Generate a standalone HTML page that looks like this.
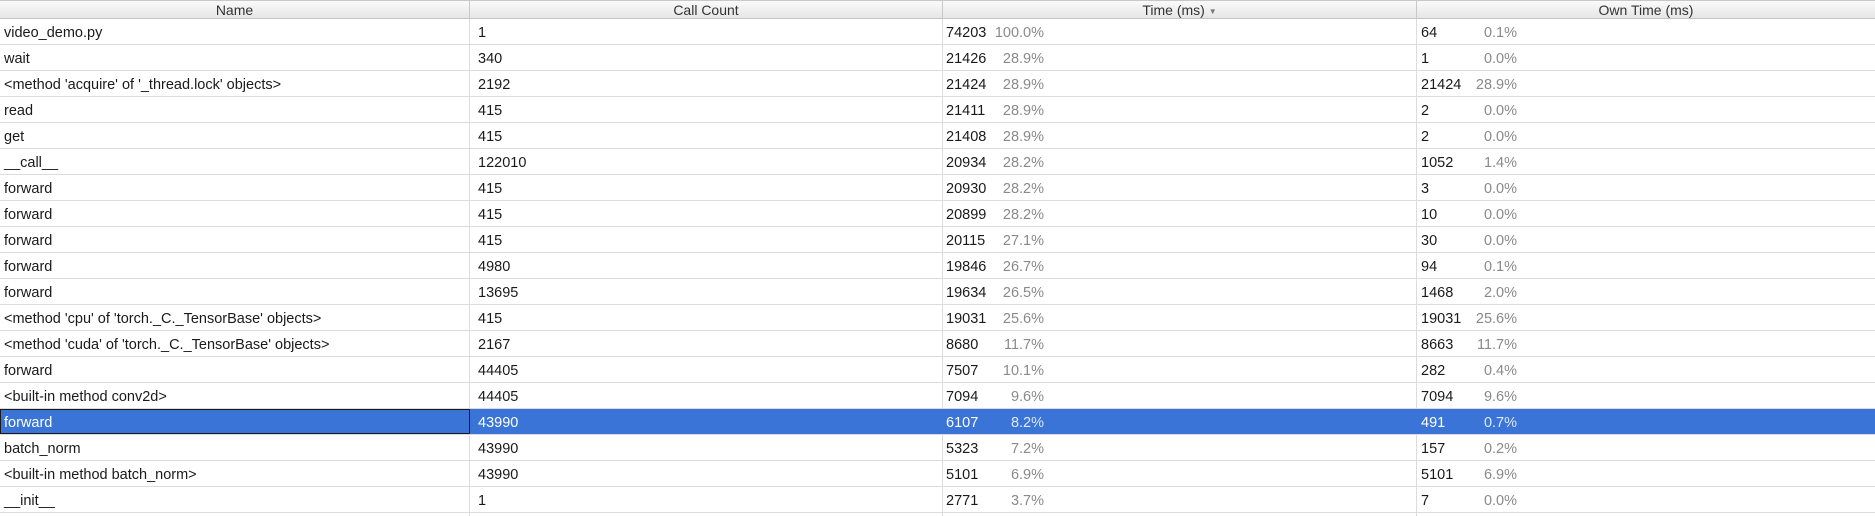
<!DOCTYPE html>
<html><head><meta charset="utf-8"><style>
body{margin:0;width:1875px;height:516px;overflow:hidden;background:#fff;font-family:"Liberation Sans","DejaVu Sans",sans-serif;font-size:14.5px;color:#1a1a1a}
.hdr{position:absolute;left:0;top:0;width:1875px;height:19px;background:linear-gradient(#fafafa,#e6e6e6);border-top:1px solid #c8c8c8;border-bottom:1px solid #c4c4c4;box-sizing:border-box}
.h{position:absolute;top:0;height:18px;line-height:18px;text-align:center;color:#333;border-right:1px solid #c8c8c8;box-sizing:border-box;font-size:14px}
.row{position:absolute;left:0;width:1875px;height:26px;border-bottom:1px solid #dcdcdc;box-sizing:border-box}
.c{position:absolute;top:2px;height:23px;line-height:25px;white-space:nowrap}
.v{position:absolute;top:0;width:1px;height:516px;background:#dcdcdc}
.p{position:absolute;top:2px;line-height:25px;color:#8a8a8a;text-align:right}
.sel{background:#3a74d6;color:#fff}
.sel .p{color:#dfe8f7}
</style></head><body>
<div class="v" style="left:469px"></div>
<div class="v" style="left:942px"></div>
<div class="v" style="left:1416px"></div>
<div class="hdr">
<div class="h" style="left:0;width:470px">Name</div>
<div class="h" style="left:470px;width:473px">Call Count</div>
<div class="h" style="left:943px;width:474px">Time (ms) <span style="font-size:8px;color:#777;position:relative;top:-1px">&#9660;</span></div>
<div class="h" style="left:1417px;width:458px;border-right:none">Own Time (ms)</div>
</div>
<div id="rows"></div>
<script>
const d=[["video_demo.py","1","74203","100.0%","64","0.1%"],["wait","340","21426","28.9%","1","0.0%"],["<method 'acquire' of '_thread.lock' objects>","2192","21424","28.9%","21424","28.9%"],["read","415","21411","28.9%","2","0.0%"],["get","415","21408","28.9%","2","0.0%"],["__call__","122010","20934","28.2%","1052","1.4%"],["forward","415","20930","28.2%","3","0.0%"],["forward","415","20899","28.2%","10","0.0%"],["forward","415","20115","27.1%","30","0.0%"],["forward","4980","19846","26.7%","94","0.1%"],["forward","13695","19634","26.5%","1468","2.0%"],["<method 'cpu' of 'torch._C._TensorBase' objects>","415","19031","25.6%","19031","25.6%"],["<method 'cuda' of 'torch._C._TensorBase' objects>","2167","8680","11.7%","8663","11.7%"],["forward","44405","7507","10.1%","282","0.4%"],["<built-in method conv2d>","44405","7094","9.6%","7094","9.6%"],["forward","43990","6107","8.2%","491","0.7%"],["batch_norm","43990","5323","7.2%","157","0.2%"],["<built-in method batch_norm>","43990","5101","6.9%","5101","6.9%"],["__init__","1","2771","3.7%","7","0.0%"]];
const e=s=>s.replace(/&/g,"&amp;").replace(/</g,"&lt;").replace(/>/g,"&gt;");
let h="";d.forEach((r,i)=>{const top=19+i*26;const s=i==15;
h+=`<div class="row${s?' sel':''}" style="top:${top}px">`+
(s?`<div style="position:absolute;left:0;top:0;width:470px;height:25px;border:1px solid #1a1a1a;box-sizing:border-box"></div>`:'')+
`<div class="c" style="left:4px">${e(r[0])}</div><div class="c" style="left:478px">${r[1]}</div><div class="c" style="left:946px">${r[2]}</div><div class="p" style="left:984px;width:60px">${r[3]}</div><div class="c" style="left:1421px">${r[4]}</div><div class="p" style="left:1457px;width:60px">${r[5]}</div></div>`;});
document.getElementById("rows").innerHTML=h;
</script>
</body></html>
